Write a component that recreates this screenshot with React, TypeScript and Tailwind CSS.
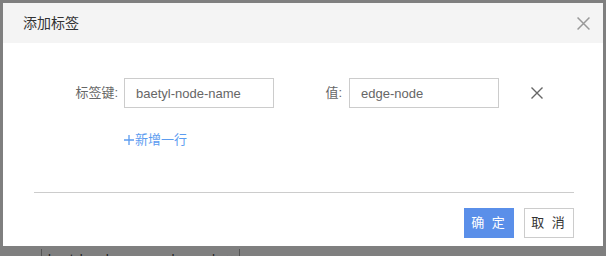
import React from "react";

const CloseIcon = ({ size, color, width }: { size: number; color: string; width: number }) => (
  <svg width={size} height={size} viewBox="0 0 12 12" fill="none">
    <path d="M0.5 0.5L11.5 11.5M11.5 0.5L0.5 11.5" stroke={color} strokeWidth={width} />
  </svg>
);

const TagRow = ({ tagKey, tagValue }: { tagKey: string; tagValue: string }) => (
  <div className="flex items-center">
    <label className="w-[121px] pr-[6px] text-right text-[13px] text-[#666]">标签键:</label>
    <input
      readOnly
      value={tagKey}
      className="w-[150px] h-[30px] border border-[#ccc] px-[11px] text-[13px] text-[#666] outline-none"
    />
    <label className="w-[75px] pr-[7px] text-right text-[13px] text-[#666]">值:</label>
    <input
      readOnly
      value={tagValue}
      className="w-[150px] h-[30px] border border-[#ccc] px-[11px] text-[13px] text-[#666] outline-none"
    />
    <button className="ml-[32px] flex items-center">
      <CloseIcon size={12} color="#666" width={1.4} />
    </button>
  </div>
);

export default function App() {
  return (
    <div
      className="relative w-[606px] h-[256px] overflow-hidden bg-[#7f7f7f]"
      style={{ fontFamily: '"Liberation Sans", "Noto Sans CJK SC", sans-serif' }}
    >
      {/* page behind the mask */}
      <div className="pt-[246px] pl-[41px]">
        <div className="inline-flex items-center h-[20px] px-[6px] border-x border-[#555] text-[13px] text-[#1c1c1c]">
          baetyl-node-name: edge-node ×
        </div>
      </div>

      {/* dialog */}
      <div className="absolute left-[3px] top-[3px] w-[600px] h-[243px] bg-white flex flex-col">
        <div className="h-[40px] bg-[#f4f4f4] flex items-center justify-between pl-[20px] pr-[13px]">
          <span className="text-[14px] text-[#333]">添加标签</span>
          <CloseIcon size={13} color="#999" width={1.4} />
        </div>

        <div className="pt-[35px]">
          <TagRow tagKey="baetyl-node-name" tagValue="edge-node" />
          <div className="pl-[121px] mt-[24px] flex items-center text-[13px] leading-[16px] text-[#5c9cf0]">
            <svg width="10" height="10" viewBox="0 0 10 10" className="mr-[1px]">
              <path d="M5 0V10M0 5H10" stroke="#5c9cf0" strokeWidth="1.3" />
            </svg>
            新增一行
          </div>
        </div>

        <div className="mt-[44px] ml-[31px] mr-[29px] border-t border-[#ccc]" />

        <div className="flex justify-end gap-[10px] mt-[15px] mr-[29px]">
          <button className="w-[50px] h-[30px] bg-[#5a8fe9] text-white text-[13px] tracking-[2px]">确 定</button>
          <button className="w-[50px] h-[30px] border border-[#ccc] bg-white text-[#333] text-[13px] tracking-[2px]">取 消</button>
        </div>
      </div>
    </div>
  );
}
